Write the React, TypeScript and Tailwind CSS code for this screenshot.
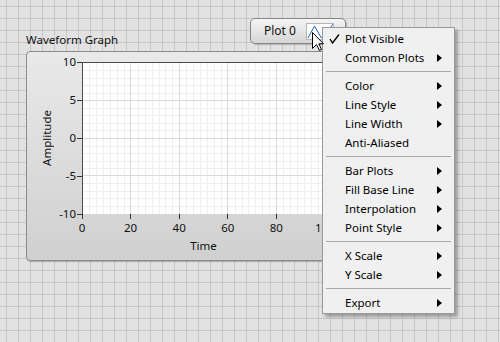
import React from 'react';

const yLabels = ['10', '5', '0', '-5', '-10'];
const xLabels = ['0', '20', '40', '60', '80', '100'];

type MenuEntry = { label?: string; checked?: boolean; sub?: boolean; sep?: boolean };

const menu: MenuEntry[] = [
  { label: 'Plot Visible', checked: true },
  { label: 'Common Plots', sub: true },
  { sep: true },
  { label: 'Color', sub: true },
  { label: 'Line Style', sub: true },
  { label: 'Line Width', sub: true },
  { label: 'Anti-Aliased' },
  { sep: true },
  { label: 'Bar Plots', sub: true },
  { label: 'Fill Base Line', sub: true },
  { label: 'Interpolation', sub: true },
  { label: 'Point Style', sub: true },
  { sep: true },
  { label: 'X Scale', sub: true },
  { label: 'Y Scale', sub: true },
  { sep: true },
  { label: 'Export', sub: true },
];

function PlotGrid() {
  const w = 243;
  const h = 152;
  const majorX = (w - 1) / 5;
  const majorY = (h - 1) / 4;
  const minorX = majorX / 7;
  const minorY = majorY / 5;
  const minors: React.ReactNode[] = [];
  for (let i = 1; i < 35; i++) {
    if (i % 7 === 0) continue;
    const x = Math.round(0.5 + i * minorX) + 0.5;
    minors.push(<line key={'mx' + i} x1={x} y1={0} x2={x} y2={h} stroke="#efefef" />);
  }
  for (let i = 1; i < 20; i++) {
    if (i % 5 === 0) continue;
    const y = Math.round(0.5 + i * minorY) + 0.5;
    minors.push(<line key={'my' + i} x1={0} y1={y} x2={w} y2={y} stroke="#efefef" />);
  }
  const majors: React.ReactNode[] = [];
  for (let i = 1; i <= 5; i++) {
    const x = Math.round(i * majorX) + 0.5;
    majors.push(<line key={'Mx' + i} x1={x} y1={0} x2={x} y2={h} stroke="#dadada" />);
  }
  for (let i = 1; i < 4; i++) {
    const y = Math.round(i * majorY) + 0.5;
    majors.push(<line key={'My' + i} x1={0} y1={y} x2={w} y2={y} stroke="#dadada" />);
  }
  return (
    <svg width={w} height={h} className="block">
      <rect width={w} height={h} fill="#ffffff" />
      {minors}
      {majors}
      <line x1={0.5} y1={0} x2={0.5} y2={h} stroke="#4a4a4a" />
      <line x1={0} y1={0.5} x2={w} y2={0.5} stroke="#4a4a4a" />
    </svg>
  );
}

export default function App() {
  return (
    <div
      className="relative w-[500px] h-[342px] overflow-hidden bg-[#e2e2e2] bg-[linear-gradient(to_right,#c7c7c7_1px,transparent_1px),linear-gradient(to_bottom,#c7c7c7_1px,transparent_1px)] bg-[size:12px_12px] bg-[position:6px_6px] text-[11.5px] text-[#111]"
      style={{ fontFamily: '"Noto Sans", "Liberation Sans", sans-serif' }}
    >
      {/* graph */}
      <div className="absolute left-[26px] top-[32px]">
        <div className="h-[16px] leading-[16px]">Waveform Graph</div>
        <div className="mt-[3px] w-[316px] h-[210px] rounded-[4px] border border-[#8c8c8c] bg-[linear-gradient(to_bottom,#e9e9e9,#d0d0d0)] shadow-[1px_1px_1px_rgba(0,0,0,0.25)]">
          <div className="flex items-start pt-[10px]">
            <div className="w-[28px] h-[152px] flex items-center justify-end">
              <div className="[writing-mode:vertical-rl] rotate-180 leading-[16px]">Amplitude</div>
            </div>
            <div className="w-[27px] h-[168px] -my-[8px] flex flex-col justify-between">
              {yLabels.map((l) => (
                <div key={l} className="h-[16px] flex items-center justify-end leading-[16px]">
                  <span>{l}</span>
                  <span className="ml-[1px] w-[5px] h-px bg-[#333]" />
                </div>
              ))}
            </div>
            <PlotGrid />
          </div>
          <div className="ml-[40px] w-[273px] flex justify-between">
            {xLabels.map((l) => (
              <div key={l} className="w-[30px] flex flex-col items-center">
                <span className="w-px h-[5px] bg-[#333]" />
                <span className="mt-[2px] h-[14px] leading-[14px]">{l}</span>
              </div>
            ))}
          </div>
          <div className="ml-[55px] w-[243px] mt-[3px] h-[16px] leading-[16px] text-center">Time</div>
        </div>
      </div>

      {/* plot legend */}
      <div className="absolute left-[250px] top-[18px] w-[96px] h-[26px] rounded-[5px] border border-[#878787] bg-[linear-gradient(to_bottom,#f5f5f5,#d5d5d5)] shadow-[1px_1px_1px_rgba(0,0,0,0.2)] flex items-center">
        <span className="ml-[13px] leading-[16px] text-[12px]">Plot 0</span>
        <div className="ml-[10px] w-[28px] h-[17px] bg-white border border-[#b5b5b5]">
          <svg width="26" height="15" className="block">
            <polyline points="1,14 7.5,2 14.5,14 27,-1" fill="none" stroke="#1c64c8" strokeWidth="1" />
          </svg>
        </div>
      </div>

      {/* context menu */}
      <div className="absolute left-[322px] top-[27px] w-[133px] border border-[#999] bg-[#f0f0f0] py-[1px] shadow-[3px_3px_3px_rgba(0,0,0,0.3)]">
        {menu.map((m, i) =>
          m.sep ? (
            <div key={i} className="h-[9px] flex items-center px-[3px]">
              <div className="w-full h-px bg-[#a9a9a9]" />
            </div>
          ) : (
            <div key={i} className="h-[19px] flex items-center pr-[12px]">
              <div className="w-[22px] flex justify-center pl-[1px]">
                {m.checked && (
                  <svg width="11" height="10" className="block">
                    <polyline points="1,5 3.5,9 10,0.5" fill="none" stroke="#000" strokeWidth="1.4" />
                  </svg>
                )}
              </div>
              <span className="flex-1 leading-[16px] text-black">{m.label}</span>
              {m.sub && (
                <svg width="5" height="8" className="block">
                  <polygon points="0,0 5,4 0,8" fill="#000" />
                </svg>
              )}
            </div>
          )
        )}
      </div>

      {/* mouse cursor */}
      <svg className="absolute left-[311px] top-[31px]" width="14" height="21">
        <path d="M1.5 1.5 L1.5 17.5 L5.5 13.5 L8.5 19.5 L10.5 18.5 L7.8 12.8 L12.5 12.8 Z" fill="#fff" stroke="#000" strokeWidth="1" strokeLinejoin="miter" />
      </svg>
    </div>
  );
}
